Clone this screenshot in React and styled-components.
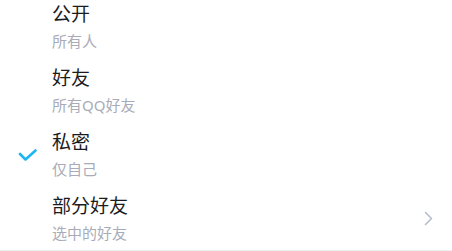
import React from "react";
import styled, { createGlobalStyle } from "styled-components";

const GlobalStyle = createGlobalStyle`
  html, body {
    margin: 0;
    padding: 0;
    background: #ffffff;
    overflow: hidden;
  }
  body {
    font-family: "Noto Sans", "Noto Sans CJK SC", sans-serif;
  }
`;

// the screenshot cuts the top of the first row
const List = styled.div`
  margin-top: -6px;
  border-bottom: 1px solid #efeff1;
`;

const Row = styled.div`
  display: flex;
  align-items: center;
  height: 64px;
  padding-right: 19px;
`;

const IconCell = styled.div`
  width: 52px;
  display: flex;
  justify-content: center;
  align-items: center;
  padding-left: 4px;
  padding-top: 3px;
  box-sizing: border-box;
`;

const TextCell = styled.div`
  flex: 1;
  display: flex;
  flex-direction: column;
`;

const Title = styled.div`
  font-size: 19px;
  line-height: 26px;
  color: #1c1c1e;
`;

const Subtitle = styled.div`
  font-size: 15px;
  line-height: 20px;
  margin-top: 4px;
  color: #a9acb8;
`;

const CheckIcon = () => (
  <svg width="20" height="14" viewBox="0 0 20 14">
    <polyline
      points="2,5 7.5,10.5 17.5,1.5"
      fill="none"
      stroke="#1eb6f2"
      strokeWidth="2.6"
      strokeLinecap="round"
      strokeLinejoin="round"
    />
  </svg>
);

const Chevron = () => (
  <svg width="9" height="15" viewBox="0 0 9 15">
    <polyline
      points="1.5,1.5 7.5,7.5 1.5,13.5"
      fill="none"
      stroke="#b6bdcc"
      strokeWidth="1.6"
      strokeLinecap="round"
      strokeLinejoin="round"
    />
  </svg>
);

const options = [
  { title: "公开", desc: "所有人" },
  { title: "好友", desc: "所有QQ好友" },
  { title: "私密", desc: "仅自己", checked: true },
  { title: "部分好友", desc: "选中的好友", more: true },
];

export default function App() {
  return (
    <>
      <GlobalStyle />
      <List>
        {options.map((o) => (
          <Row key={o.title}>
            <IconCell>{o.checked && <CheckIcon />}</IconCell>
            <TextCell>
              <Title>{o.title}</Title>
              <Subtitle>{o.desc}</Subtitle>
            </TextCell>
            {o.more && <Chevron />}
          </Row>
        ))}
      </List>
    </>
  );
}
